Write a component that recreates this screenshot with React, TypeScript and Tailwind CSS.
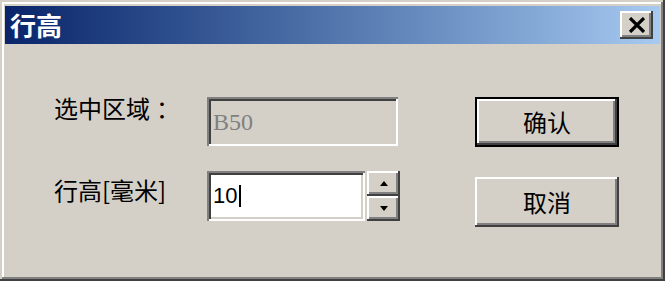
import React from 'react';

const cjk = { fontFamily: '"Noto Sans CJK SC", "Noto Sans", sans-serif' };

const raised =
  'shadow-[inset_-2px_-2px_0_#404040,inset_2px_2px_0_#ffffff,inset_-4px_-4px_0_#808080]';
const sunken =
  'shadow-[inset_2px_2px_0_#808080,inset_-2px_-2px_0_#ffffff,inset_4px_4px_0_#404040,inset_-4px_-4px_0_#d4d0c8]';

function SpinButton({ up }: { up?: boolean }) {
  return (
    <div className={`h-[25px] w-[33px] bg-[#d4d0c8] flex items-center justify-center ${raised}`}>
      <svg width="8" height="5" viewBox="0 0 8 5">
        {up ? <path d="M4 0 L8 5 L0 5 Z" fill="#000" /> : <path d="M0 0 L8 0 L4 5 Z" fill="#000" />}
      </svg>
    </div>
  );
}

export default function App() {
  return (
    <div
      className="w-[665px] h-[281px] bg-[#d4d0c8] pt-[6px] px-[5px] shadow-[inset_-2px_-2px_0_#404040,inset_2px_2px_0_#d4d0c8,inset_-4px_-4px_0_#808080,inset_4px_4px_0_#ffffff]"
      style={cjk}
    >
      {/* Title bar */}
      <div className="h-[38px] bg-linear-to-r from-[#0a246a] to-[#a6caf0] flex items-center justify-between pl-[5px] pr-[7px]">
        <span className="text-white font-bold text-[26px] leading-none">行高</span>
        <div className={`w-[33px] h-[28px] bg-[#d4d0c8] flex items-center justify-center ${raised}`}>
          <svg width="18" height="16" viewBox="0 0 18 16">
            <path d="M2 1 L16 15 M16 1 L2 15" stroke="#000" strokeWidth="3.2" />
          </svg>
        </div>
      </div>

      {/* Body */}
      <div className="flex pl-[49px] pt-[53px]">
        <div className="flex flex-col gap-[25px] w-[421px]">
          <div className="flex items-start">
            <span className="w-[153px] text-[24px] leading-[30px] text-black -mt-[4px]">
              选中区域<span className="ml-[6px]">：</span>
            </span>
            <div className={`w-[191px] h-[49px] bg-[#d4d0c8] flex items-center pl-[6px] ${sunken}`}>
              <span
                className="text-[24px] leading-none text-[#808080]"
                style={{ fontFamily: '"Liberation Serif", serif' }}
              >
                B50
              </span>
            </div>
          </div>
          <div className="flex items-start">
            <span className="w-[153px] text-[24px] leading-[30px] text-black pt-[4px]">行高[毫米]</span>
            <div className={`w-[158px] h-[50px] bg-white flex items-center pl-[6px] ${sunken}`}>
              <span
                className="text-[22px] leading-none text-black"
                style={{ fontFamily: '"Liberation Sans", sans-serif' }}
              >
                10
              </span>
              <span className="w-[2px] h-[22px] bg-black ml-[2px]" />
            </div>
            <div className="flex flex-col ml-[2px]">
              <SpinButton up />
              <SpinButton />
            </div>
          </div>
        </div>

        <div className="flex flex-col gap-[30px] mt-[0px]">
          <div className="w-[144px] h-[50px] border-2 border-black">
            <div className={`w-full h-full bg-[#d4d0c8] flex items-center justify-center text-[24px] text-black ${raised}`}>
              确认
            </div>
          </div>
          <div className={`w-[144px] h-[50px] bg-[#d4d0c8] flex items-center justify-center text-[24px] text-black ${raised}`}>
            取消
          </div>
        </div>
      </div>
    </div>
  );
}
